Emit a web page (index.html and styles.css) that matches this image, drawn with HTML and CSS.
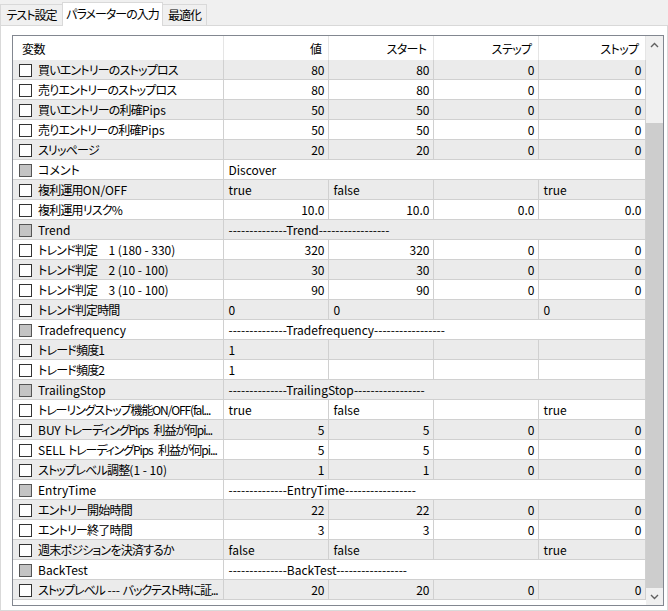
FILE: index.html
```html
<!DOCTYPE html>
<html lang="ja">
<head>
    <meta charset="UTF-8">
    <title>パラメーターの入力</title>
    <link rel="stylesheet" href="styles.css">
</head>
<body>
    <div class="tabs">
        <div class="tab t1">テスト設定</div>
        <div class="tab t2 active">パラメーターの入力</div>
        <div class="tab t3">最適化</div>
    </div>
    <div class="panel">
        <div class="listbox">
            <div class="grid">
                <table>
                    <colgroup>
                        <col class="c-name"><col class="c-val"><col class="c-val"><col class="c-val"><col class="c-stop">
                    </colgroup>
                    <thead>
                        <tr>
                            <th class="name">変数</th>
                            <th>値</th>
                            <th>スタート</th>
                            <th>ステップ</th>
                            <th>ストップ</th>
                        </tr>
                    </thead>
                    <tbody>
                        <tr><td class="name"><span class="cb"></span>買いエントリーのストップロス</td><td class="num">80</td><td class="num">80</td><td class="num">0</td><td class="num">0</td></tr>
                        <tr><td class="name"><span class="cb"></span>売りエントリーのストップロス</td><td class="num">80</td><td class="num">80</td><td class="num">0</td><td class="num">0</td></tr>
                        <tr><td class="name"><span class="cb"></span>買いエントリーの利確<span class="lat">Pips</span></td><td class="num">50</td><td class="num">50</td><td class="num">0</td><td class="num">0</td></tr>
                        <tr><td class="name"><span class="cb"></span>売りエントリーの利確<span class="lat">Pips</span></td><td class="num">50</td><td class="num">50</td><td class="num">0</td><td class="num">0</td></tr>
                        <tr><td class="name"><span class="cb"></span>スリッページ</td><td class="num">20</td><td class="num">20</td><td class="num">0</td><td class="num">0</td></tr>
                        <tr><td class="name grp"><span class="cb grp"></span>コメント</td><td class="txt" colspan="4">Discover</td></tr>
                        <tr><td class="name"><span class="cb"></span>複利運用<span class="lat">ON/OFF</span></td><td class="txt">true</td><td class="txt">false</td><td class="txt"></td><td class="txt">true</td></tr>
                        <tr><td class="name"><span class="cb"></span>複利運用リスク%</td><td class="num">10.0</td><td class="num">10.0</td><td class="num">0.0</td><td class="num">0.0</td></tr>
                        <tr><td class="name grp"><span class="cb grp"></span>Trend</td><td class="txt" colspan="4">--------------Trend-----------------</td></tr>
                        <tr><td class="name"><span class="cb"></span>トレンド判定　<span class="lat">1 (180 - 330)</span></td><td class="num">320</td><td class="num">320</td><td class="num">0</td><td class="num">0</td></tr>
                        <tr><td class="name"><span class="cb"></span>トレンド判定　<span class="lat">2 (10 - 100)</span></td><td class="num">30</td><td class="num">30</td><td class="num">0</td><td class="num">0</td></tr>
                        <tr><td class="name"><span class="cb"></span>トレンド判定　<span class="lat">3 (10 - 100)</span></td><td class="num">90</td><td class="num">90</td><td class="num">0</td><td class="num">0</td></tr>
                        <tr><td class="name"><span class="cb"></span>トレンド判定時間</td><td class="txt">0</td><td class="txt">0</td><td class="txt"></td><td class="txt">0</td></tr>
                        <tr><td class="name grp"><span class="cb grp"></span>Tradefrequency</td><td class="txt" colspan="4">--------------Tradefrequency-----------------</td></tr>
                        <tr><td class="name"><span class="cb"></span>トレード頻度1</td><td class="txt">1</td><td class="txt"></td><td class="txt"></td><td class="txt"></td></tr>
                        <tr><td class="name"><span class="cb"></span>トレード頻度2</td><td class="txt">1</td><td class="txt"></td><td class="txt"></td><td class="txt"></td></tr>
                        <tr><td class="name grp"><span class="cb grp"></span>TrailingStop</td><td class="txt" colspan="4">--------------TrailingStop-----------------</td></tr>
                        <tr><td class="name long"><span class="cb"></span>トレーリングストップ機能ON/OFF(fal...</td><td class="txt">true</td><td class="txt">false</td><td class="txt"></td><td class="txt">true</td></tr>
                        <tr><td class="name long"><span class="cb"></span><span class="lat">BUY </span>トレーディングPips<span class="lat">&nbsp; </span>利益が何pi...</td><td class="num">5</td><td class="num">5</td><td class="num">0</td><td class="num">0</td></tr>
                        <tr><td class="name long"><span class="cb"></span><span class="lat">SELL </span>トレーディングPips<span class="lat">&nbsp; </span>利益が何pi...</td><td class="num">5</td><td class="num">5</td><td class="num">0</td><td class="num">0</td></tr>
                        <tr><td class="name"><span class="cb"></span>ストップレベル調整<span class="lat">(1 - 10)</span></td><td class="num">1</td><td class="num">1</td><td class="num">0</td><td class="num">0</td></tr>
                        <tr><td class="name grp"><span class="cb grp"></span>EntryTime</td><td class="txt" colspan="4">--------------EntryTime-----------------</td></tr>
                        <tr><td class="name"><span class="cb"></span>エントリー開始時間</td><td class="num">22</td><td class="num">22</td><td class="num">0</td><td class="num">0</td></tr>
                        <tr><td class="name"><span class="cb"></span>エントリー終了時間</td><td class="num">3</td><td class="num">3</td><td class="num">0</td><td class="num">0</td></tr>
                        <tr><td class="name"><span class="cb"></span>週末ポジションを決済するか</td><td class="txt">false</td><td class="txt">false</td><td class="txt"></td><td class="txt">true</td></tr>
                        <tr><td class="name grp"><span class="cb grp"></span>BackTest</td><td class="txt" colspan="4">--------------BackTest-----------------</td></tr>
                        <tr><td class="name long"><span class="cb"></span>ストップレベル<span class="lat"> --- </span>バックテスト時に証...</td><td class="num">20</td><td class="num">20</td><td class="num">0</td><td class="num">0</td></tr>
                    </tbody>
                </table>
            </div>
            <div class="scrollbar">
                <div class="sb-btn">
                    <svg width="9" height="6" viewBox="0 0 9 6"><path d="M1 5 L4.5 1.5 L8 5" fill="none" stroke="#606060" stroke-width="1.4"/></svg>
                </div>
                <div class="sb-track"><div class="sb-thumb"></div></div>
                <div class="sb-btn">
                    <svg width="9" height="6" viewBox="0 0 9 6"><path d="M1 1 L4.5 4.5 L8 1" fill="none" stroke="#606060" stroke-width="1.4"/></svg>
                </div>
            </div>
        </div>
    </div>
</body>
</html>
```

FILE: styles.css
```css
body {
    margin: 0;
    width: 668px;
    height: 611px;
    overflow: hidden;
    background-color: #f0f0f0;
    font-family: "Noto Sans CJK JP", "Noto Sans", sans-serif;
    font-feature-settings: "palt" 1;
    font-size: 12px;
    color: #000;
}
.tabs {
    display: flex;
    align-items: flex-end;
    height: 25px;
    position: relative;
    z-index: 2;
}
.tab {
    box-sizing: border-box;
    height: 21px;
    line-height: 20px;
    border: 1px solid #d9d9d9;
    border-bottom: none;
    background-color: #f0f0f0;
    text-align: center;
    white-space: nowrap;
    letter-spacing: -1px;
}
.tab.t1 {
    width: 62px;
    border-right: none;
}
.tab.t2 {
    width: 101px;
}
.tab.t3 {
    width: 44px;
    border-left: none;
}
.tab.active {
    height: 24px;
    line-height: 22px;
    margin-bottom: -1px;
    background-color: #fff;
}
.panel {
    box-sizing: border-box;
    height: 586px;
    background-color: #fff;
    border: 1px solid #d9d9d9;
    padding: 9px 0 0 11px;
}
.listbox {
    box-sizing: border-box;
    width: 652px;
    height: 571px;
    border: 1px solid #828790;
    background-color: #fff;
    display: flex;
}
.grid {
    width: 633px;
    overflow: hidden;
}
table {
    width: 632px;
    table-layout: fixed;
    border-collapse: collapse;
}
col.c-name {
    width: 210px;
}
col.c-val {
    width: 105px;
}
col.c-stop {
    width: 107px;
}
th {
    height: 24px;
    padding: 0 6px 0 0;
    font-weight: normal;
    text-align: right;
    border-right: 1px solid #e5e5e5;
    white-space: nowrap;
    letter-spacing: -0.6px;
}
th.name {
    text-align: left;
    padding-left: 9px;
}
td {
    height: 19px;
    padding: 0;
    border-right: 1px solid #d0d0d0;
    border-bottom: 1px solid #d0d0d0;
    white-space: nowrap;
    overflow: hidden;
    line-height: 19px;
}
tbody tr:nth-child(odd) {
    background-color: #ebebeb;
}
td.name {
    padding-left: 6px;
    letter-spacing: -0.8px;
}
td.name.grp,
td.name .lat {
    letter-spacing: 0;
}
td.name.long {
    letter-spacing: -1.1px;
}
td.num {
    text-align: right;
    padding-right: 3px;
}
td.txt {
    padding-left: 5px;
}
.cb {
    display: inline-block;
    box-sizing: border-box;
    width: 13px;
    height: 13px;
    border: 1px solid #333;
    background-color: #fff;
    vertical-align: -2px;
    margin-right: 6px;
}
.cb.grp {
    background-color: #c4c4c4;
    border-color: #555;
}
.scrollbar {
    width: 17px;
    display: flex;
    flex-direction: column;
    background-color: #f0f0f0;
}
.sb-btn {
    height: 17px;
    display: flex;
    justify-content: center;
    align-items: center;
}
.sb-track {
    flex: 1;
    display: flex;
    flex-direction: column;
    padding-top: 70px;
}
.sb-thumb {
    flex: 1;
    background-color: #cdcdcd;
}
```
